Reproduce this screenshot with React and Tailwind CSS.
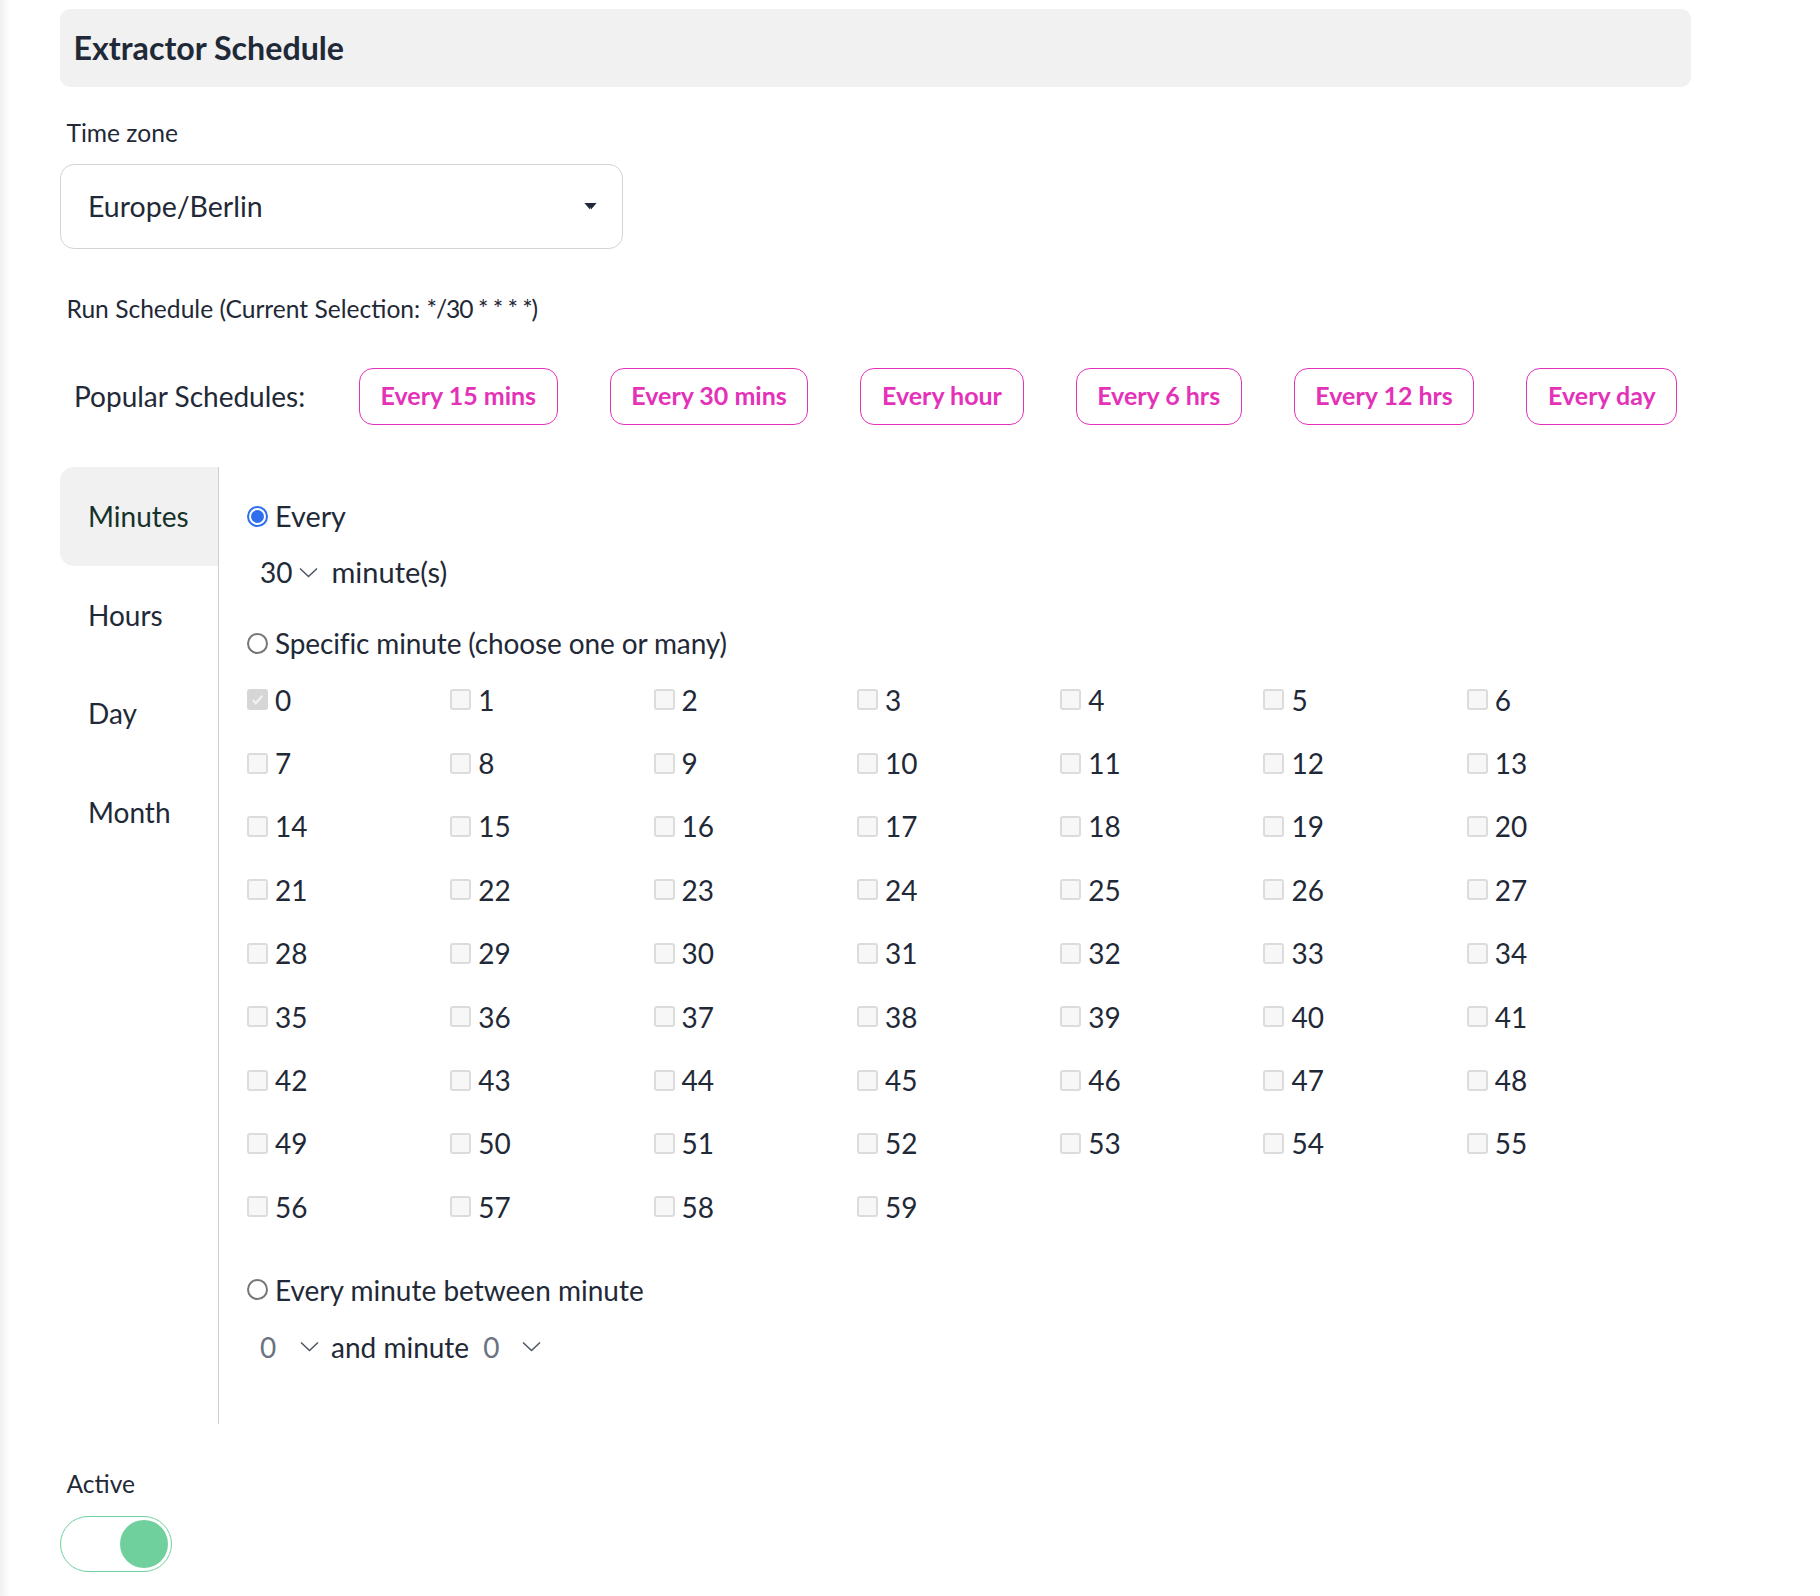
const schedules = ["Every 15 mins", "Every 30 mins", "Every hour", "Every 6 hrs", "Every 12 hrs", "Every day"];
const tabs = ["Minutes", "Hours", "Day", "Month"];
const minutes = Array.from({ length: 60 }, (_, i) => i);

function Chevron() {
  return (
    <svg viewBox="0 0 19 11" className="h-[11px] w-[19px] shrink-0" fill="none" stroke="#4b5563" strokeWidth="1.5">
      <path d="M1 1.5l8.5 8 8.5-8" />
    </svg>
  );
}

function Radio({ checked }) {
  return (
    <span
      className={`h-[21px] w-[21px] shrink-0 rounded-full border-2 bg-white flex items-center justify-center ${
        checked ? "border-[#2f6fed]" : "border-[#767676]"
      }`}
    >
      {checked && <span className="h-[13px] w-[13px] rounded-full bg-[#2f6fed]" />}
    </span>
  );
}

function Check({ value }) {
  const checked = value === 0;
  return (
    <div className="flex items-center gap-[7px]">
      <span
        className={`h-[21px] w-[21px] shrink-0 rounded-[3px] border-2 flex items-center justify-center ${
          checked ? "border-[#d6d6d6] bg-[#d6d6d6]" : "border-[#dcdcdc] bg-[#f7f7f7]"
        }`}
      >
        {checked && (
          <svg viewBox="0 0 16 16" className="h-[15px] w-[15px]" fill="none" stroke="#f2f2f2" strokeWidth="2.4">
            <path d="M3 8.5l3.2 3.5L13 4" />
          </svg>
        )}
      </span>
      <span>{value}</span>
    </div>
  );
}

export default function App() {
  return (
    <div className="h-[1596px] w-[1820px] overflow-hidden bg-[linear-gradient(to_right,#f0f0f0,#ffffff_10px)] pl-[60px] pr-[129px] pt-[9px] font-['Lato',sans-serif] text-[#1f2937] leading-[30px]">
      <div className="flex h-[78px] items-center rounded-[10px] bg-[#f1f1f1] px-[13.5px] text-[32.2px] font-bold">
        Extractor Schedule
      </div>

      <div className="mt-[31px] pl-[6.5px] text-[24.6px]">Time zone</div>
      <div className="mt-[16px] flex h-[85px] w-[563px] items-center justify-between rounded-[14px] border border-[#d4d4d4] bg-white pl-[27px] pr-[25px] text-[28.5px]">
        <span className="pb-[2px]">Europe/Berlin</span>
        <svg viewBox="0 0 14 8" className="h-[7px] w-[13px]" fill="#1f2937">
          <path d="M0 0h14L7.6 7.5 7 4.5 6.4 7.5z" />
        </svg>
      </div>

      <div className="mt-[45px] pl-[6.5px] text-[24.6px]">
        Run Schedule (Current Selection: <span className="tracking-[-1px]">*/30 * * * *)</span>
      </div>

      <div className="mt-[44px] flex h-[57px] items-center text-[28px]">
        <div className="w-[299px] pb-[2px] pl-[14px]">Popular Schedules:</div>
        <div className="flex items-center gap-[52px]">
          {schedules.map((s) => (
            <button
              key={s}
              className="h-[57px] rounded-[14px] border border-[#e432b8] bg-white px-[20.6px] pb-[4px] text-[25px] font-bold text-[#e432b8]"
            >
              {s}
            </button>
          ))}
        </div>
      </div>

      <div className="mt-[42px] flex h-[957px]">
        <div className="w-[159px] shrink-0 border-r border-[#cfcfcf] text-[28px]">
          {tabs.map((t, i) => (
            <div
              key={t}
              className={`flex h-[98.6px] items-center pl-[28px] ${
                i === 0 ? "rounded-l-[14px] bg-[#f1f1f1] text-[#15332b]" : ""
              }`}
            >
              {t}
            </div>
          ))}
        </div>

        <div className="flex-1 pl-[28px] pt-[34px] text-[28px]">
          <div className="flex items-center gap-[7px]">
            <Radio checked />
            <span className="text-[28.8px]">Every</span>
          </div>
          <div className="mt-[26px] flex items-center pl-[13px]">
            <span>30</span>
            <span className="ml-[7px]">
              <Chevron />
            </span>
            <span className="ml-[13px] text-[29px]">minute(s)</span>
          </div>

          <div className="mt-[41px] flex items-center gap-[7px]">
            <Radio />
            <span className="tracking-[-0.13px]">Specific minute (choose one or many)</span>
          </div>
          <div className="mt-[10px] grid grid-cols-[repeat(7,203.3px)] auto-rows-[63.4px] items-center">
            {minutes.map((m) => (
              <Check key={m} value={m} />
            ))}
          </div>

          <div className="mt-[36px] flex items-center gap-[7px]">
            <Radio />
            <span>Every minute between minute</span>
          </div>
          <div className="mt-[27px] flex items-center pl-[13px]">
            <span className="w-[40px] text-[#6b7280]">0</span>
            <Chevron />
            <span className="ml-[12px]">and minute</span>
            <span className="ml-[14px] w-[39px] text-[#6b7280]">0</span>
            <Chevron />
          </div>
        </div>
      </div>

      <div className="mt-[45px] pl-[6.5px] text-[24.6px]">Active</div>
      <div className="mt-[17px] flex h-[56px] w-[112px] items-center justify-end rounded-full border border-[#6fd09e] bg-white pr-[3px]">
        <span className="h-[48px] w-[48px] rounded-full bg-[#6fd09e]" />
      </div>
    </div>
  );
}
